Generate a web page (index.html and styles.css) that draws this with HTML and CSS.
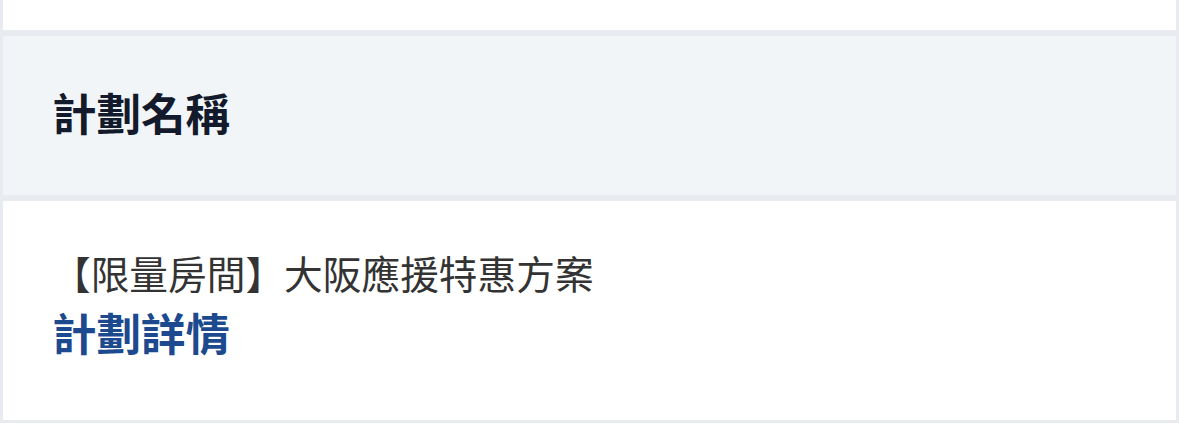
FILE: index.html
```html
<!DOCTYPE html>
<html lang="zh-Hant">
<head>
    <meta charset="UTF-8">
    <title>計劃名稱</title>
    <link rel="stylesheet" href="styles.css">
</head>
<body>
    <div class="plan-table">
        <div class="cell cell-prev"></div>
        <div class="cell cell-head">
            <h2>計劃名稱</h2>
        </div>
        <div class="cell cell-body">
            <p class="plan-name">【限量房間】大阪應援特惠方案</p>
            <a class="plan-link" href="#">計劃詳情</a>
        </div>
    </div>
</body>
</html>
```

FILE: styles.css
```css
body {
    margin: 0;
    padding: 0;
    background: #fff;
    font-family: "Noto Sans CJK TC", "Noto Sans", sans-serif;
}
.plan-table {
    display: flex;
    flex-direction: column;
}
.cell {
    border: 3px solid #e8ecf1;
}
.cell-prev {
    height: 30px;
    border-top: none;
}
.cell-head {
    box-sizing: border-box;
    height: 165px;
    background: #f2f5f8;
    padding: 0 0 8px 49px;
    display: flex;
    align-items: center;
}
.cell-head h2 {
    margin: 0;
    font-size: 44.5px;
    font-weight: 700;
    color: #121a2c;
    line-height: 60px;
}
.cell-body {
    padding: 43px 0 56px 49px;
    display: flex;
    flex-direction: column;
    align-items: flex-start;
}
.plan-name {
    margin: 0;
    font-size: 38.7px;
    line-height: 56px;
    color: #333;
}
.plan-link {
    font-size: 44.5px;
    font-weight: 700;
    line-height: 64px;
    color: #1d4a8e;
    text-decoration: none;
}
```
